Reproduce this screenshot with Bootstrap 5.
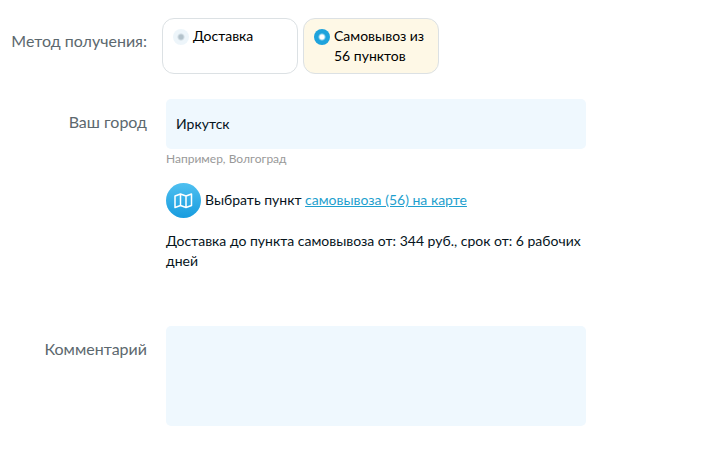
<!DOCTYPE html>
<html lang="ru">
<head>
<meta charset="utf-8">
<meta name="viewport" content="width=device-width, initial-scale=1">
<title>Оформление заказа</title>
<link href="https://cdn.jsdelivr.net/npm/bootstrap@5.3.0/dist/css/bootstrap.min.css" rel="stylesheet">
<style>
body { font-family: Lato, Roboto, sans-serif; font-size: 14px; line-height: 20px; color: #06141c; background: #fff; }
.order-form { padding: 18px 0 30px; }
.field-name { flex: 0 0 147px; padding-top: 11px; font-size: 16px; line-height: 24px; text-align: right; color: #5c686e; white-space: nowrap; }
.field-body { flex: 1 1 0; min-width: 0; max-width: 439px; padding-left: 19px; }
.city-row { margin-top: 25px; }
.comment-row { margin-top: 55px; }
.methods { padding-left: 15px; gap: 5px; }
.method { width: 136px; min-height: 56px; padding: 7px 0 7px 10px; gap: 4px; border: 1px solid #dce1e4; border-radius: 12px; color: #000; cursor: pointer; }
.method:has(input:checked) { background: #fef8e6; }
.method input { appearance: none; flex: none; width: 16px; height: 16px; margin: 3px 0 0; border-radius: 50%; background: radial-gradient(circle, #b3c2cb 2px, #edf5fa 4px); }
.method input:checked { background: radial-gradient(circle, #fff 2px, #1fa3dc 4px); }
.form-control.soft-input { min-height: 50px; padding: 0 10px; border: 0; border-radius: 5px; background: #eff8fe; color: #06141c; font-size: 14px; line-height: 20px; }
.form-control.soft-area { height: 100px; padding: 10px; resize: none; }
.hint { font-size: 12px; line-height: 20px; color: #999; }
.map-line { margin-top: 14px; gap: 4px; }
.map-line span { padding-bottom: 2px; }
.map-line a { color: #1f9fce; }
.delivery-note { margin: 13px 0 0; }
</style>
</head>
<body>
<form class="order-form">
  <div class="d-flex" role="radiogroup" aria-labelledby="method-name">
    <div class="field-name" id="method-name">Метод получения:</div>
    <div class="methods d-flex">
      <label class="method d-flex align-items-start"><input type="radio" name="method"><span>Доставка</span></label>
      <label class="method d-flex align-items-start"><input type="radio" name="method" checked><span>Самовывоз из 56 пунктов</span></label>
    </div>
  </div>
  <div class="city-row d-flex">
    <label class="field-name" for="city">Ваш город</label>
    <div class="field-body">
      <input class="form-control soft-input" id="city" type="text" value="Иркутск">
      <div class="hint">Например, Волгоград</div>
      <div class="map-line d-flex align-items-center">
        <svg width="35" height="35" viewBox="0 0 35 35" aria-hidden="true">
          <defs><linearGradient id="sky" x1="0" y1="0" x2="0" y2="1"><stop offset="0" stop-color="#4fc0f0"/><stop offset="1" stop-color="#189cdf"/></linearGradient></defs>
          <circle cx="17.5" cy="17.5" r="17.5" fill="url(#sky)"/>
          <path d="M9 13 14.500 11 20 13 25.500 11V22.500L20 24.500 14.500 22.500 9 24.500ZM14.500 11V22.500M20 13V24.500" fill="none" stroke="#fff" stroke-width="1.500" stroke-linejoin="round"/>
        </svg>
        <span>Выбрать пункт <a href="#map">самовывоза (56) на карте</a></span>
      </div>
      <p class="delivery-note">Доставка до пункта самовывоза от: 344 руб., срок от: 6 рабочих дней</p>
    </div>
  </div>
  <div class="comment-row d-flex">
    <label class="field-name" for="comment">Комментарий</label>
    <div class="field-body">
      <textarea class="form-control soft-input soft-area" id="comment"></textarea>
    </div>
  </div>
</form>
<script src="https://cdn.jsdelivr.net/npm/bootstrap@5.3.0/dist/js/bootstrap.bundle.min.js"></script>
</body>
</html>
